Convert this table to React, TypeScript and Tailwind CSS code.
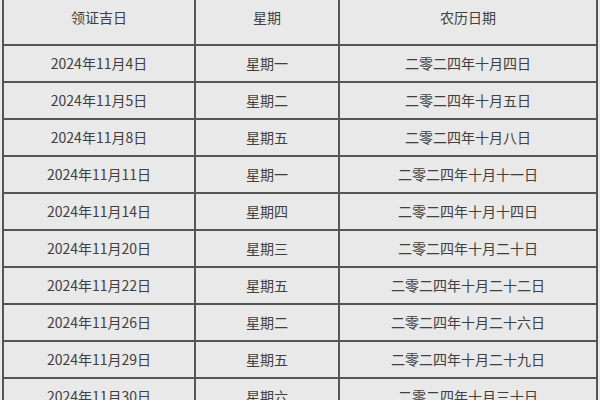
import React from 'react'

const rows = [
  ['2024年11月4日', '星期一', '二零二四年十月四日'],
  ['2024年11月5日', '星期二', '二零二四年十月五日'],
  ['2024年11月8日', '星期五', '二零二四年十月八日'],
  ['2024年11月11日', '星期一', '二零二四年十月十一日'],
  ['2024年11月14日', '星期四', '二零二四年十月十四日'],
  ['2024年11月20日', '星期三', '二零二四年十月二十日'],
  ['2024年11月22日', '星期五', '二零二四年十月二十二日'],
  ['2024年11月26日', '星期二', '二零二四年十月二十六日'],
  ['2024年11月29日', '星期五', '二零二四年十月二十九日'],
  ['2024年11月30日', '星期六', '二零二四年十月三十日'],
]

const font = { fontFamily: '"Noto Sans CJK SC", "Liberation Sans", sans-serif' }

function Row({ cells, header }: { cells: string[]; header?: boolean }) {
  return (
    <div
      className={`grid grid-cols-[192px_144px_1fr] border-b-2 border-[#555] ${header ? 'h-[55px]' : 'h-[37px]'}`}
    >
      {cells.map((c, i) => (
        <div key={i} className="flex items-center justify-center border-r-2 border-[#555] text-[14px] text-[#404040]">
          {c}
        </div>
      ))}
    </div>
  )
}

export default function App() {
  return (
    <div className="w-[600px] h-[400px] overflow-hidden bg-[#e9e9e9] px-[2px]" style={font}>
      {/* top of the table is cropped off in the screenshot */}
      <div className="-mt-[9px] border-l-2 border-[#555]">
        <Row header cells={['领证吉日', '星期', '农历日期']} />
        {rows.map((r, i) => (
          <Row key={i} cells={r} />
        ))}
      </div>
    </div>
  )
}
